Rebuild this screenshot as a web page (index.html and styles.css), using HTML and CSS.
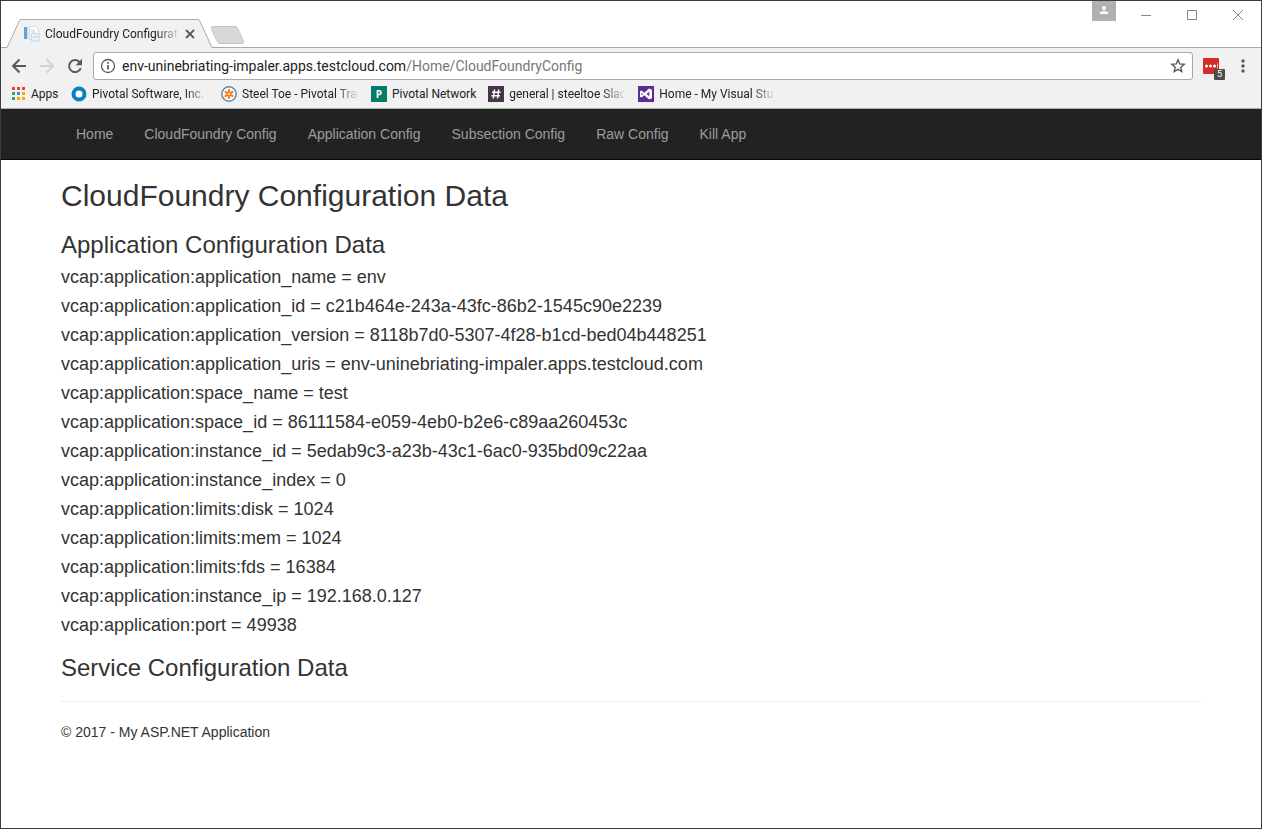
FILE: index.html
```html
<!DOCTYPE html>
<html lang="en">
<head>
<meta charset="utf-8">
<title>CloudFoundry Configuration</title>
<link rel="stylesheet" href="styles.css">
</head>
<body>
<div class="window">
  <header class="chrome">
    <div class="titlebar">
      <div class="tab">
        <svg class="tab-shape" viewBox="0 0 208 30" aria-hidden="true"><path d="M0 28.500L13 .5H192L205 28.500V30H0Z" fill="#f1f1f1"/><path d="M0 28.500L12.500 1.500Q13 .5 14 .5H191Q192 .5 192.500 1.500L204.500 27.500Q205 28.500 208 28.500" fill="none" stroke="#a9a9a9"/></svg>
        <svg class="favicon" width="16" height="16" viewBox="0 0 16 16" aria-hidden="true"><path d="M0 1h4v12H0z" fill="#64a3d3"/><path d="M3 1h1v12H3z" fill="#bcd9ee"/><path d="M5.500 .5h6l3 3v10h-9z" fill="#fff" stroke="#d0dbe3"/><path d="M7 4h4M7 6h4" stroke="#c3d3e0"/><path d="M7.500 7.500h7.500v7.500h-7.500z" fill="#edf3f8" stroke="#cad6e0"/><path d="M9 11h5" stroke="#b3cce0"/></svg>
        <span class="tab-title">CloudFoundry Configurat</span>
        <button class="plain" aria-label="Close tab"><svg width="10" height="10" viewBox="0 0 10 10"><path d="M1 1l8 8M9 1L1 9" stroke="#5a5a5a" stroke-width="1.800"/></svg></button>
      </div>
      <button class="plain new-tab" aria-label="New tab"><svg width="36" height="18" viewBox="0 0 36 18"><path d="M3 .5H25Q27 .5 28 3L33.500 15Q34.500 17.500 32 17.500H10Q8 17.500 7 15L1.500 3Q.5 .5 3 .5Z" fill="#d8d8d8" stroke="#c4c4c4"/></svg></button>
      <div class="window-controls">
        <button class="plain profile" aria-label="Profile"><svg width="24" height="20" viewBox="0 0 24 20"><path d="M0 0h24v20H0z" fill="#b0b0b0"/><circle cx="12" cy="7" r="2" fill="#fff"/><path d="M8 13v-1q0-2 4-2t4 2v1z" fill="#fff"/></svg></button>
        <button class="plain control" aria-label="Minimize"><svg width="12" height="12" viewBox="0 0 12 12"><path d="M1 6.500h10" stroke="#888"/></svg></button>
        <button class="plain control" aria-label="Maximize"><svg width="12" height="12" viewBox="0 0 12 12"><path d="M1.500 1.500h9v9h-9z" fill="none" stroke="#888"/></svg></button>
        <button class="plain control" aria-label="Close"><svg width="12" height="12" viewBox="0 0 12 12"><path d="M1 1l10 10M11 1L1 11" stroke="#888"/></svg></button>
      </div>
    </div>
    <div class="toolbar">
      <button class="plain" aria-label="Back"><svg width="16" height="16" viewBox="0 0 16 16"><path d="M15 8H2.500M8.500 1.500L2 8l6.500 6.500" fill="none" stroke="#5a5a5a" stroke-width="2"/></svg></button>
      <button class="plain" aria-label="Forward"><svg width="16" height="16" viewBox="0 0 16 16"><path d="M1 8h12.500M7.500 1.500L14 8l-6.500 6.500" fill="none" stroke="#d2d2d2" stroke-width="2"/></svg></button>
      <button class="plain" aria-label="Reload"><svg width="16" height="16" viewBox="0 0 16 16"><path d="M12.500 4A6 6 0 1 0 13.800 10" fill="none" stroke="#5a5a5a" stroke-width="2"/><path d="M15 .8v6.400H8.600z" fill="#5a5a5a"/></svg></button>
      <div class="address">
        <svg width="16" height="16" viewBox="0 0 16 16" aria-hidden="true"><circle cx="8" cy="8" r="6.500" fill="none" stroke="#5a5a5a" stroke-width="1.300"/><path d="M8 7v4.500M8 4v1.700" stroke="#5a5a5a" stroke-width="1.700"/></svg>
        <div class="url" role="textbox" aria-label="Address" contenteditable="true" spellcheck="false">env-uninebriating-impaler.apps.testcloud.com<span class="url-path">/Home/CloudFoundryConfig</span></div>
        <button class="plain" aria-label="Bookmark this page"><svg width="16" height="16" viewBox="0 0 16 16"><path d="M8 1.800l1.700 4.100 4.500.4-3.400 2.900 1 4.400L8 11.300l-3.800 2.300 1-4.400L1.800 6.300l4.500-.4z" fill="none" stroke="#5a5a5a" stroke-width="1.400"/></svg></button>
      </div>
      <button class="plain extension" aria-label="Password manager, 5 items"><svg width="17" height="17" viewBox="0 0 17 17"><rect width="16" height="16" rx="1" fill="#d32d27"/><circle cx="3.500" cy="8" r="1.500" fill="#fff"/><circle cx="7.500" cy="8" r="1.500" fill="#fff"/><circle cx="11.500" cy="8" r="1.500" fill="#fff"/><path d="M14.500 5.500v5" stroke="#f1aaa7"/></svg><span class="badge">5</span></button>
      <button class="plain menu" aria-label="Menu"><svg width="4" height="16" viewBox="0 0 4 16"><circle cx="2" cy="3" r="1.700" fill="#5a5a5a"/><circle cx="2" cy="8" r="1.700" fill="#5a5a5a"/><circle cx="2" cy="13" r="1.700" fill="#5a5a5a"/></svg></button>
    </div>
    <nav class="bookmarks" aria-label="Bookmarks">
      <a href="#"><svg width="15" height="16" viewBox="0 0 15 16" aria-hidden="true"><path d="M1 1h3v3H1zM6 1h3v3H6zM11 1h3v3h-3z" fill="#ea4335"/><path d="M1 6h3v3H1zM1 11h3v3H1z" fill="#34a853"/><path d="M6 6h3v3H6z" fill="#4285f4"/><path d="M11 6h3v3h-3zM6 11h3v3H6zM11 11h3v3h-3z" fill="#fbaa05"/></svg><span class="apps">Apps</span></a>
      <a href="#"><svg width="16" height="16" viewBox="0 0 16 16" aria-hidden="true"><circle cx="8" cy="8" r="5.500" fill="#fff" stroke="#0a7fc2" stroke-width="4"/></svg><span class="clipped">Pivotal Software, Inc. -</span></a>
      <a href="#"><svg width="16" height="16" viewBox="0 0 16 16" aria-hidden="true"><circle cx="8" cy="8" r="7.200" fill="#fff" stroke="#5a89ae" stroke-width="1.500"/><path d="M8 8V4M8 8l3.500-2M8 8l3.500 2M8 8v4M8 8l-3.500 2M8 8L4.500 6" stroke="#f47f2b" stroke-width="2.200" stroke-linecap="round"/><circle cx="8" cy="8" r="1" fill="#fff"/></svg><span class="clipped">Steel Toe - Pivotal Trac</span></a>
      <a href="#"><svg width="16" height="16" viewBox="0 0 16 16" aria-hidden="true"><path d="M0 0h16v16H0z" fill="#047d6b"/><text x="8" y="12" class="glyph">P</text></svg><span>Pivotal Network</span></a>
      <a href="#"><svg width="16" height="16" viewBox="0 0 16 16" aria-hidden="true"><path d="M0 0h16v16H0z" fill="#463449"/><path d="M6.500 3.500L5.300 12.500M10.700 3.500L9.500 12.500M4 6.200h8.500M3.500 9.800H12" stroke="#fff" stroke-width="1.500"/></svg><span class="clipped">general | steeltoe Slac</span></a>
      <a href="#"><svg width="16" height="16" viewBox="0 0 16 16" aria-hidden="true"><path d="M0 0h16v16H0z" fill="#5c2d91"/><path d="M11 2.500l3 1.200v8.600l-3 1.200L6.300 9.200 3.500 11.500 2 10.700V5.300l1.500-.8 2.800 2.300zM11.300 5.700L8.500 8l2.800 2.300zM3.600 6.500v3L5 8z" fill="#fff" fill-rule="evenodd"/></svg><span class="clipped">Home - My Visual Stu</span></a>
    </nav>
  </header>
  <nav class="navbar" aria-label="Site">
    <ul class="container nav-list">
      <li><a href="#">Home</a></li>
      <li><a href="#">CloudFoundry Config</a></li>
      <li><a href="#">Application Config</a></li>
      <li><a href="#">Subsection Config</a></li>
      <li><a href="#">Raw Config</a></li>
      <li><a href="#">Kill App</a></li>
    </ul>
  </nav>
  <main class="container">
    <h2>CloudFoundry Configuration Data</h2>
    <h3>Application Configuration Data</h3>
    <h4>vcap:application:application_name = env</h4>
    <h4>vcap:application:application_id = c21b464e-243a-43fc-86b2-1545c90e2239</h4>
    <h4>vcap:application:application_version = 8118b7d0-5307-4f28-b1cd-bed04b448251</h4>
    <h4>vcap:application:application_uris = env-uninebriating-impaler.apps.testcloud.com</h4>
    <h4>vcap:application:space_name = test</h4>
    <h4>vcap:application:space_id = 86111584-e059-4eb0-b2e6-c89aa260453c</h4>
    <h4>vcap:application:instance_id = 5edab9c3-a23b-43c1-6ac0-935bd09c22aa</h4>
    <h4>vcap:application:instance_index = 0</h4>
    <h4>vcap:application:limits:disk = 1024</h4>
    <h4>vcap:application:limits:mem = 1024</h4>
    <h4>vcap:application:limits:fds = 16384</h4>
    <h4>vcap:application:instance_ip = 192.168.0.127</h4>
    <h4>vcap:application:port = 49938</h4>
    <h3>Service Configuration Data</h3>
    <hr>
    <footer>© 2017 - My ASP.NET Application</footer>
  </main>
</div>
</body>
</html>
```
FILE: styles.css
```css
* { box-sizing: border-box; }

body {
  margin: 0;
  font: 14px/20px "Liberation Sans", Arial, sans-serif;
  color: #333;
  background: #fff;
}

.window {
  min-height: 100vh;
  border: 1px solid #3c3c3e;
}

.chrome {
  background: #f1f1f1;
  border-bottom: 1px solid #a9b0ab;
  font: 12px/16px Roboto, "Open Sans", sans-serif;
  color: #222;
}

.chrome svg { display: block; flex: none; }

.plain {
  display: block;
  padding: 0;
  border: 0;
  background: none;
  font: inherit;
}

.titlebar {
  display: flex;
  align-items: flex-end;
  height: 47px;
  padding-left: 6px;
  background: linear-gradient(#a9a9a9, #a9a9a9) bottom / 100% 1px no-repeat #fff;
}

.tab {
  position: relative;
  display: flex;
  align-items: center;
  gap: 5px;
  width: 208px;
  height: 29px;
  padding: 0 20px 0 17px;
}

.tab > * { position: relative; }

.tab .tab-shape {
  position: absolute;
  left: 0;
  top: 0;
  width: 208px;
  height: 30px;
}

.tab-title, .clipped {
  overflow: hidden;
  white-space: nowrap;
  -webkit-mask-image: linear-gradient(to right, #000 calc(100% - 24px), transparent);
  mask-image: linear-gradient(to right, #000 calc(100% - 24px), transparent);
}

.tab-title { flex: 1; }

.new-tab { padding-bottom: 4px; margin-left: -5px; }

.window-controls {
  display: flex;
  align-self: flex-start;
  align-items: flex-start;
  margin-left: auto;
}

.profile { margin-right: 7px; }
.control { padding: 8px 17px; }

.toolbar {
  display: flex;
  align-items: center;
  gap: 12px;
  height: 36px;
  padding: 0 16px 0 10px;
}

.address {
  flex: 1;
  display: flex;
  align-items: center;
  gap: 6px;
  height: 28px;
  margin-left: -2px;
  padding: 0 6px;
  border: 1px solid #a9a9a9;
  border-radius: 3px;
  background: #fff;
}

.url {
  flex: 1;
  font-size: 14px;
  line-height: 20px;
  white-space: nowrap;
  overflow: hidden;
}

.url-path { color: #777; }

.extension { position: relative; margin-left: -2px; }

.badge {
  position: absolute;
  left: 11px;
  top: 11px;
  width: 11px;
  height: 11px;
  border-radius: 1px;
  background: #4d4d4d;
  color: #fff;
  font-size: 9px;
  line-height: 11px;
}

.menu { margin-left: 9px; }

.bookmarks {
  display: flex;
  gap: 12px;
  height: 24px;
  padding: 2px 10px 0;
}

.bookmarks a {
  display: flex;
  gap: 5px;
  color: inherit;
  text-decoration: none;
  white-space: nowrap;
}

.apps { width: 28px; }
.clipped { width: 117px; }

.glyph {
  font: 700 10px "Open Sans", sans-serif;
  fill: #fff;
  text-anchor: middle;
}

.container {
  max-width: 1170px;
  margin: 0 auto;
  padding: 0 15px;
}

.navbar {
  background: #222;
  border-bottom: 1px solid #080808;
}

.nav-list {
  display: flex;
  gap: 1px;
  list-style: none;
}

.nav-list a {
  display: block;
  padding: 15px;
  color: #9d9d9d;
  text-decoration: none;
}

h2, h3, h4 { font-weight: 400; }
h2 { margin: 19px 0 20px; font-size: 30px; line-height: 33px; }
h3 { margin: 20px 0 10px; font-size: 24px; line-height: 26px; }
h4 { margin: 10px 0; font-size: 18px; line-height: 19px; }

hr {
  margin: 20px 0;
  border: 0;
  border-top: 1px solid #eee;
}
```
